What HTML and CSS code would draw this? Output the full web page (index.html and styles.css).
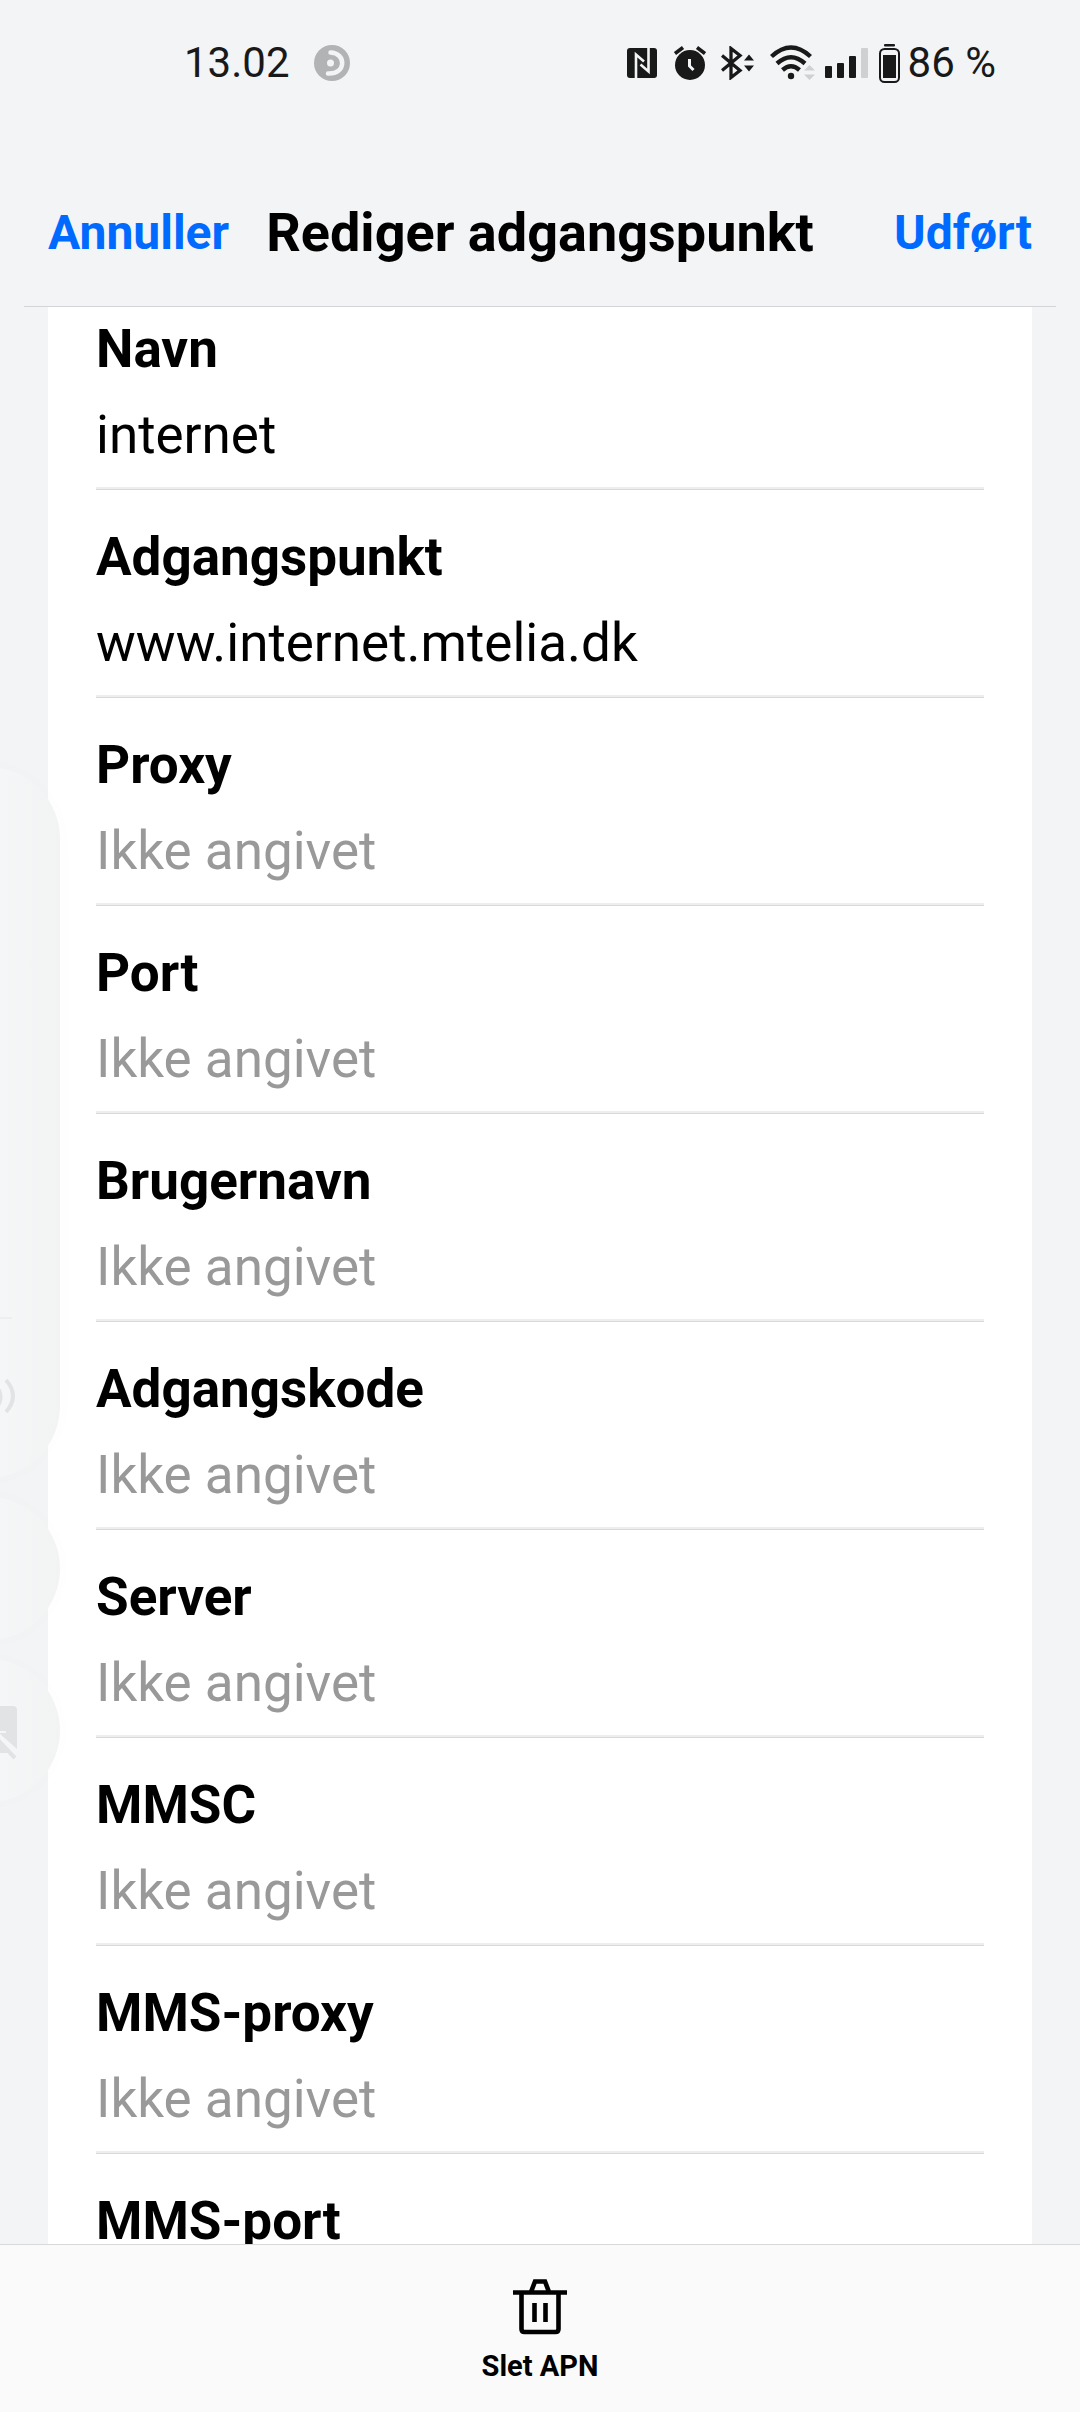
FILE: index.html
```html
<!DOCTYPE html>
<html lang="da">
<head>
<meta charset="utf-8">
<meta name="viewport" content="width=device-width, initial-scale=1">
<title>Rediger adgangspunkt</title>
<link rel="stylesheet" href="styles.css">
</head>
<body>
<div class="status">
  <div class="status-left">
    <span>13.02</span>
    <svg width="36" height="36" viewBox="0 0 36 36" aria-hidden="true"><circle cx="18" cy="18" r="18" fill="#b2b3b5"/><path d="M16.500 7.500C32.500 8 32.500 29.500 14 28.500" fill="none" stroke="#f2f4f6" stroke-width="4.500" stroke-linecap="round" /><circle cx="16.500" cy="18" r="3.500" fill="#f2f4f6"/></svg>
  </div>
  <div class="status-right">
    <svg class="nfc" width="30" height="30" viewBox="0 0 30 30" aria-hidden="true"><rect width="30" height="30" rx="3" fill="#191919"/><path d="M9 30V6.500L17 13.500M21.500 0V23.500L13.500 16.500" fill="none" stroke="#f2f4f6" stroke-width="2.600"/></svg>
    <svg class="alarm" width="32" height="34" viewBox="0 0 32 34" aria-hidden="true"><circle cx="16" cy="19" r="15" fill="#191919"/><path d="M1 7.500L9 1.500M31 7.500L23 1.500" stroke="#191919" stroke-width="3.600"/><path d="M15.500 13v7l4 4" fill="none" stroke="#f2f4f6" stroke-width="3"/></svg>
    <svg class="bluetooth" width="34" height="34" viewBox="0 0 34 34" aria-hidden="true"><path d="M1 9.500L19 24.500L10 31.500V2.500L19 9.500L1 24.500" fill="none" stroke="#191919" stroke-width="3.300"/><path d="M23 14.500h10L28 8.500zM23 19.500h10L28 25.500z" fill="#191919"/></svg>
    <svg class="wifi" width="45" height="36" viewBox="0 0 45 36" aria-hidden="true"><g fill="none" stroke="#191919" stroke-width="4.400"><path d="M1.500 11.500Q21 -6.500 40.500 11.500"/><path d="M7 18.500Q21 6 35 18.500"/><path d="M12.500 25Q21 17.500 29.500 25"/></g><circle cx="21" cy="31" r="3.200" fill="#191919"/><path d="M34 25.500h11L39.500 20zM34 29.500h11L39.500 35z" fill="#cfd0d2"/></svg>
    <svg class="signal" width="43" height="30" viewBox="0 0 43 30" aria-hidden="true"><g fill="#191919"><rect y="18" width="7" height="12" rx="1"/><rect x="12" y="15" width="7" height="15" rx="1"/><rect x="24" y="8" width="7" height="22" rx="1"/></g><rect x="36" width="7" height="30" rx="1" fill="#cfd0d2"/></svg>
    <svg class="battery" width="21" height="39" viewBox="0 0 21 39" aria-hidden="true"><rect x="5" width="11" height="2.500" rx="1" fill="#191919"/><rect x="1" y="5" width="19" height="33" rx="4.500" fill="none" stroke="#191919" stroke-width="2"/><rect x="4" y="11" width="13" height="23" fill="#191919"/></svg>
    <span>86 %</span>
  </div>
</div>

<header class="topbar">
  <button class="action" type="button">Annuller</button>
  <h1 class="title">Rediger adgangspunkt</h1>
  <button class="action action-end" type="button">Udført</button>
</header>

<main class="form">
  <div class="field"><label for="navn">Navn</label><input id="navn" type="text" value="internet"></div>
  <div class="field"><label for="apn">Adgangspunkt</label><input id="apn" type="text" value="www.internet.mtelia.dk"></div>
  <div class="field"><label for="proxy">Proxy</label><input id="proxy" type="text" placeholder="Ikke angivet"></div>
  <div class="field"><label for="port">Port</label><input id="port" type="text" placeholder="Ikke angivet"></div>
  <div class="field"><label for="bruger">Brugernavn</label><input id="bruger" type="text" placeholder="Ikke angivet"></div>
  <div class="field"><label for="kode">Adgangskode</label><input id="kode" type="text" placeholder="Ikke angivet"></div>
  <div class="field"><label for="server">Server</label><input id="server" type="text" placeholder="Ikke angivet"></div>
  <div class="field"><label for="mmsc">MMSC</label><input id="mmsc" type="text" placeholder="Ikke angivet"></div>
  <div class="field"><label for="mmsproxy">MMS-proxy</label><input id="mmsproxy" type="text" placeholder="Ikke angivet"></div>
  <div class="field"><label for="mmsport">MMS-port</label><input id="mmsport" type="text"></div>
</main>

<footer class="bottombar">
  <button class="delete" type="button">
    <svg width="54" height="56" viewBox="0 0 54 56" aria-hidden="true"><path d="M0 13.500H54M18 13L22 2.500H32L36 13M8.500 13V50Q8.500 53 11.500 53H42.500Q45.500 53 45.500 50V13M21.500 24V43M32.500 24V43" fill="none" stroke="#000" stroke-width="4.600"/></svg>
    <span>Slet APN</span>
  </button>
</footer>

<div class="volume" aria-hidden="true">
  <div class="panel">
    <div class="panel-rule"></div>
    <svg class="panel-icon" width="60" height="40" viewBox="0 0 60 40"><path d="M42 8Q51 20 42 32" fill="#e2e3e4"/><path d="M50 3Q64 19 50 35" fill="none" stroke="#e2e3e4" stroke-width="4"/></svg>
  </div>
  <div class="bubble"></div>
  <div class="bubble">
    <svg width="60" height="60" viewBox="0 0 60 60"><path d="M0 3H56Q60 3 60 7V46L42 30H49V28H40L36 32L55 50H0Z" fill="#e2e3e4"/><path d="M38 34L58 55" stroke="#e2e3e4" stroke-width="4"/></svg>
  </div>
</div>
</body>
</html>
```
FILE: styles.css
```css
* { box-sizing: border-box; }

body {
  margin: 0;
  height: 100vh;
  display: flex;
  flex-direction: column;
  overflow: hidden;
  background: #f2f4f6;
  color: #000;
  font-family: Roboto, "Liberation Sans", sans-serif;
}

button {
  padding: 0;
  border: 0;
  background: none;
  color: inherit;
  font: inherit;
}

svg { display: block; flex: none; }

/* System status row */
.status {
  display: flex;
  justify-content: space-between;
  padding: 38px 84px 0 184px;
  font-size: 42px;
  line-height: 50px;
  color: #191919;
}
.status-left, .status-right { display: flex; align-items: center; }
.status-left { gap: 24px; }
.nfc { margin-right: 17px; }
.alarm { margin-right: 15px; }
.bluetooth { margin-right: 15px; }
.wifi { margin-right: 10px; }
.signal { margin-right: 11px; }
.battery { margin-right: 8px; }

/* Title row */
.topbar {
  display: grid;
  grid-template-columns: 1fr auto 1fr;
  align-items: center;
  margin: 0 24px;
  padding: 113px 24px 41px;
  border-bottom: 1px solid #d3d4d7;
}
.title {
  margin: 0;
  font-size: 54px;
  line-height: 64px;
  font-weight: 700;
}
.action {
  justify-self: start;
  color: #006aff;
  font-size: 48px;
  line-height: 56px;
  font-weight: 700;
}
.action-end { justify-self: end; }

/* Field list, scrolled so that the first field's top padding is partly hidden */
.form {
  flex: 1;
  min-height: 0;
  overflow: hidden;
  margin: 0 48px;
  padding: 0 48px;
  background: #fff;
}
.field {
  display: flex;
  flex-direction: column;
  gap: 22px;
  padding: 35px 0 22px;
  border-bottom: 1px solid #d9d9d9;
  box-shadow: inset 0 -2px #eee;
}
.field:first-child { padding-top: 10px; }
.field label {
  font-size: 53px;
  line-height: 64px;
  font-weight: 700;
}
.field input {
  width: 100%;
  height: 64px;
  padding: 0;
  border: 0;
  outline: 0;
  background: none;
  color: #000;
  font: 53px/64px Roboto, "Liberation Sans", sans-serif;
}
.field input::placeholder { color: #999; opacity: 1; }

/* Bottom toolbar */
.bottombar {
  display: flex;
  justify-content: center;
  padding: 34px 0 28px;
  border-top: 1px solid #d9d9d9;
  background: #fafafa;
}
.delete {
  display: flex;
  flex-direction: column;
  align-items: center;
  gap: 13px;
  font-size: 29px;
  line-height: 36px;
  font-weight: 700;
}

/* Volume panel fading out over the left edge */
.volume {
  position: fixed;
  left: -84px;
  top: 767px;
  display: flex;
  flex-direction: column;
  gap: 19px;
  width: 144px;
  pointer-events: none;
}
.panel, .bubble {
  border-radius: 72px;
  background: linear-gradient(90deg, #f5f6f7 60%, #f2f3f3);
  box-shadow: 0 0 40px rgba(0, 0, 0, 0.012);
}
.panel { height: 711px; padding-top: 550px; }
.panel-rule { width: 96px; height: 2px; background: #edeeef; }
.panel-icon { margin: 58px 0 0 40px; }
.bubble { height: 143px; padding: 44px 0 0 41px; }
```
